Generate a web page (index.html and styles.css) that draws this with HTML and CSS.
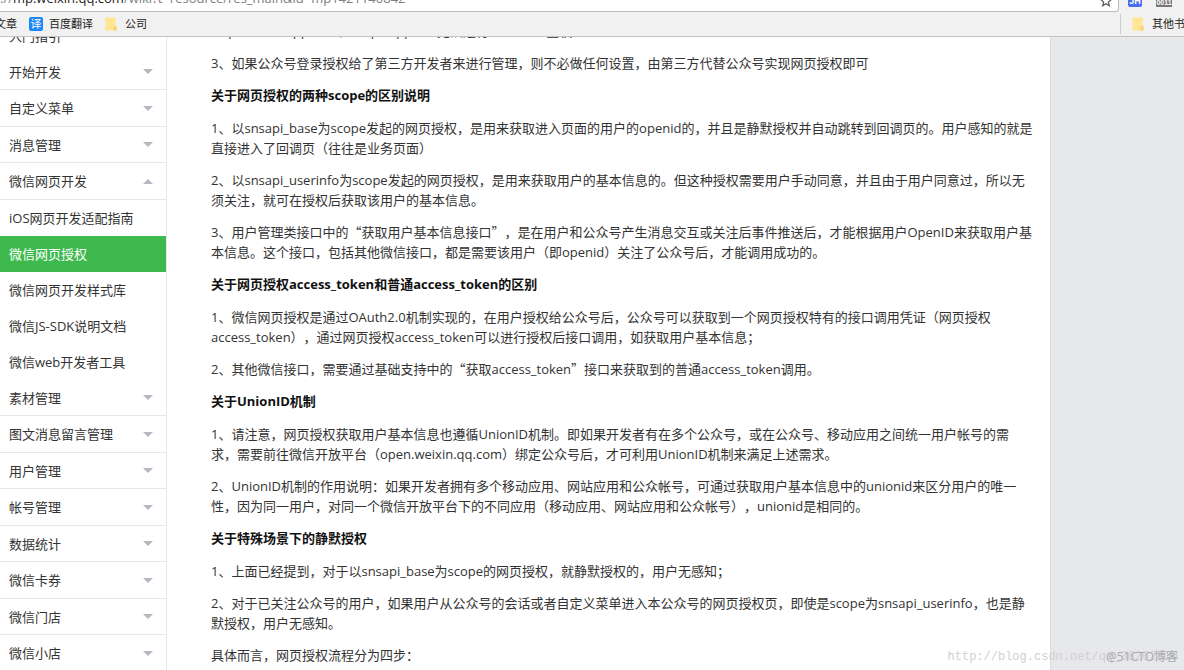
FILE: index.html
```
<!DOCTYPE html>
<html lang="zh-CN">
<head>
<meta charset="utf-8">
<title>微信网页授权</title>
<link rel="stylesheet" href="styles.css">
</head>
<body>
<header class="browser">
  <div class="toolbar">
    <div class="omnibox">
      <div class="url" role="textbox" aria-label="地址栏" contenteditable="true" spellcheck="false">://<span class="host">mp.weixin.qq.com</span>/wiki?t=resource/res_main&amp;id=mp1421140842</div>
      <button class="icon-btn" aria-label="收藏">
        <svg width="12" height="12" viewBox="0 0 12 12"><path d="M6 .8 7.5 4.3 11.2 4.6 8.4 7.1 9.3 10.8 6 8.8 2.7 10.8 3.6 7.1.8 4.6 4.5 4.3Z" fill="none" stroke="#555" stroke-width="1.2"/></svg>
      </button>
    </div>
    <button class="ext ext-jh" aria-label="JH 扩展">JH</button>
    <button class="ext ext-bin" aria-label="0011 扩展">0011</button>
  </div>
  <nav class="bookmarks" aria-label="书签栏">
    <a class="bookmark" href="#">文章</a>
    <a class="bookmark" href="#"><span class="translate">译</span>百度翻译</a>
    <a class="bookmark folder" href="#"><svg class="folder-icon" width="12" height="14" viewBox="0 0 12 14"><path d="M.5 .5h10v8.500l1 1v3.500h-11z" fill="#ffe594"/><path d="M8.500 13.500v-3l1.500-1.500h1.500v4.500z" fill="#f8d26a"/></svg>公司</a>
    <a class="bookmark folder other" href="#"><svg class="folder-icon" width="12" height="14" viewBox="0 0 12 14"><path d="M.5 .5h10v8.500l1 1v3.500h-11z" fill="#ffe594"/><path d="M8.500 13.500v-3l1.500-1.500h1.500v4.500z" fill="#f8d26a"/></svg>其他书签</a>
  </nav>
</header>
<div class="page">
  <nav class="sidebar" aria-label="文档目录">
    <ul class="menu">
      <li><a class="entry plain" href="#">入门指引</a></li>
      <li><a class="entry" href="#">开始开发<i class="arrow"></i></a></li>
      <li><a class="entry" href="#">自定义菜单<i class="arrow"></i></a></li>
      <li><a class="entry" href="#">消息管理<i class="arrow"></i></a></li>
      <li><a class="entry" href="#">微信网页开发<i class="arrow up"></i></a>
        <ul class="submenu">
          <li><a href="#">iOS网页开发适配指南</a></li>
          <li><a class="active" href="#">微信网页授权</a></li>
          <li><a href="#">微信网页开发样式库</a></li>
          <li><a href="#">微信JS-SDK说明文档</a></li>
          <li><a href="#">微信web开发者工具</a></li>
        </ul>
      </li>
      <li><a class="entry" href="#">素材管理<i class="arrow"></i></a></li>
      <li><a class="entry" href="#">图文消息留言管理<i class="arrow"></i></a></li>
      <li><a class="entry" href="#">用户管理<i class="arrow"></i></a></li>
      <li><a class="entry" href="#">帐号管理<i class="arrow"></i></a></li>
      <li><a class="entry" href="#">数据统计<i class="arrow"></i></a></li>
      <li><a class="entry" href="#">微信卡券<i class="arrow"></i></a></li>
      <li><a class="entry" href="#">微信门店<i class="arrow"></i></a></li>
      <li><a class="entry" href="#">微信小店<i class="arrow"></i></a></li>
    </ul>
  </nav>
  <main class="content">
    <article class="article">
      <p>http://music.qq.com 、 http://qq.com无法进行OAuth2.0鉴权</p>
      <p>3、如果公众号登录授权给了第三方开发者来进行管理，则不必做任何设置，由第三方代替公众号实现网页授权即可</p>
      <h2>关于网页授权的两种scope的区别说明</h2>
      <p>1、以snsapi_base为scope发起的网页授权，是用来获取进入页面的用户的openid的，并且是静默授权并自动跳转到回调页的。用户感知的就是<br>直接进入了回调页（往往是业务页面）</p>
      <p>2、以snsapi_userinfo为scope发起的网页授权，是用来获取用户的基本信息的。但这种授权需要用户手动同意，并且由于用户同意过，所以无<br>须关注，就可在授权后获取该用户的基本信息。</p>
      <p>3、用户管理类接口中的<span class="quote">“</span>获取用户基本信息接口<span class="quote">”</span>，是在用户和公众号产生消息交互或关注后事件推送后，才能根据用户OpenID来获取用户基<br>本信息。这个接口，包括其他微信接口，都是需要该用户（即openid）关注了公众号后，才能调用成功的。</p>
      <h2>关于网页授权access_token和普通access_token的区别</h2>
      <p>1、微信网页授权是通过OAuth2.0机制实现的，在用户授权给公众号后，公众号可以获取到一个网页授权特有的接口调用凭证（网页授权<br>access_token），通过网页授权access_token可以进行授权后接口调用，如获取用户基本信息；</p>
      <p>2、其他微信接口，需要通过基础支持中的<span class="quote">“</span>获取access_token<span class="quote">”</span>接口来获取到的普通access_token调用。</p>
      <h2>关于UnionID机制</h2>
      <p>1、请注意，网页授权获取用户基本信息也遵循UnionID机制。即如果开发者有在多个公众号，或在公众号、移动应用之间统一用户帐号的需<br>求，需要前往微信开放平台（open.weixin.qq.com）绑定公众号后，才可利用UnionID机制来满足上述需求。</p>
      <p>2、UnionID机制的作用说明：如果开发者拥有多个移动应用、网站应用和公众帐号，可通过获取用户基本信息中的unionid来区分用户的唯一<br>性，因为同一用户，对同一个微信开放平台下的不同应用（移动应用、网站应用和公众帐号），unionid是相同的。</p>
      <h2>关于特殊场景下的静默授权</h2>
      <p>1、上面已经提到，对于以snsapi_base为scope的网页授权，就静默授权的，用户无感知；</p>
      <p>2、对于已关注公众号的用户，如果用户从公众号的会话或者自定义菜单进入本公众号的网页授权页，即使是scope为snsapi_userinfo，也是静<br>默授权，用户无感知。</p>
      <p>具体而言，网页授权流程分为四步：</p>
    </article>
  </main>
</div>
<div class="watermark source">http://blog.csdn.net/qq_36262810</div>
<div class="watermark owner">@51CTO博客</div>
</body>
</html>
```
FILE: styles.css
```
* { box-sizing: border-box; }
body {
  margin: 0;
  height: 100vh;
  display: flex;
  flex-direction: column;
  overflow: hidden;
  position: relative;
  background: #e7e8eb;
  color: #333;
  font: 13px/20px "Open Sans", "Noto Sans CJK SC", sans-serif;
  text-spacing-trim: space-all;
}
a { color: inherit; text-decoration: none; }
ul { margin: 0; padding: 0; list-style: none; }
button { border: 0; padding: 0; background: none; }

.browser {
  flex: none;
  background: #f1f1f1;
  border-bottom: 1px solid #c4c4c4;
}
.toolbar {
  display: flex;
  align-items: flex-end;
  height: 12px;
  padding-right: 12px;
  overflow: hidden;
}
.omnibox {
  flex: 1;
  display: flex;
  align-items: flex-end;
  height: 28px;
  padding: 0 6px 4px 0;
  background: #fff;
  border: 1px solid #bbb;
  border-left: 0;
  border-radius: 0 3px 3px 0;
}
.url { flex: 1; color: #808080; font-size: 13px; line-height: 18px; outline: 0; white-space: nowrap; }
.host { color: #222; }
.icon-btn { display: flex; }
.ext {
  height: 20px;
  margin-bottom: 5px;
  color: #fff;
  font: bold 9px/12px "Liberation Sans", sans-serif;
  display: flex;
  align-items: flex-end;
  justify-content: center;
}
.ext-jh { width: 14px; margin-left: 9px; background: #4a6cf0; border-radius: 2px; }
.ext-bin { width: 16px; margin-left: 14px; background: #777; font-size: 7px; line-height: 8px; }
.bookmarks {
  display: flex;
  align-items: center;
  height: 24px;
  font-size: 11px;
  color: #222;
  overflow: hidden;
}
.bookmark { display: flex; align-items: center; margin-right: 12px; white-space: nowrap; }
.bookmark:first-child { margin-left: -5px; }
.translate {
  width: 14px;
  height: 14px;
  margin-right: 6px;
  border-radius: 2px;
  background: #1b87f5;
  color: #fff;
  line-height: 14px;
  text-align: center;
}
.folder { gap: 8px; }
.other {
  margin-left: auto;
  margin-right: -12px;
  padding-left: 11px;
  border-left: 1px solid #ccc;
}

.page { flex: 1; min-height: 0; display: flex; overflow: hidden; }
.sidebar { flex: 0 0 167px; background: #fff; border-right: 1px solid #e7e7eb; }
.menu { margin-top: -20px; }
.entry {
  display: flex;
  align-items: center;
  justify-content: space-between;
  height: 36px;
  padding: 0 13px 0 9px;
  border-bottom: 1px solid #e7e7eb;
}
.menu > li:nth-child(odd) > .entry { height: 37px; }
.plain { border-bottom: 0; }
.arrow {
  border: 5px solid transparent;
  border-top-color: #b4b8c0;
  border-bottom: 0;
}
.up { border-top: 0; border-bottom: 5px solid #b4b8c0; }
.submenu a { display: block; padding: 8px 9px; }
.submenu .active { background: #3eb94e; color: #fff; }

.content {
  flex: 1;
  margin-right: 133px;
  background: #fff;
  border-right: 1px solid #dcdde0;
}
.article { margin-top: -16px; padding-left: 44px; white-space: nowrap; }
.article p { margin: 0 0 12px; }
.article h2 { margin: 12px 0 13px; color: #111; font-size: 13px; line-height: 20px; }
.quote { font-family: "Noto Sans CJK SC", sans-serif; }

.watermark { position: absolute; white-space: nowrap; }
.source { right: 6px; bottom: 3px; color: #d0d0cc; font: 12px/20px "Liberation Mono", monospace; }
.owner { right: 6px; bottom: 3px; color: #a9aaad; font-size: 12px; }
```
